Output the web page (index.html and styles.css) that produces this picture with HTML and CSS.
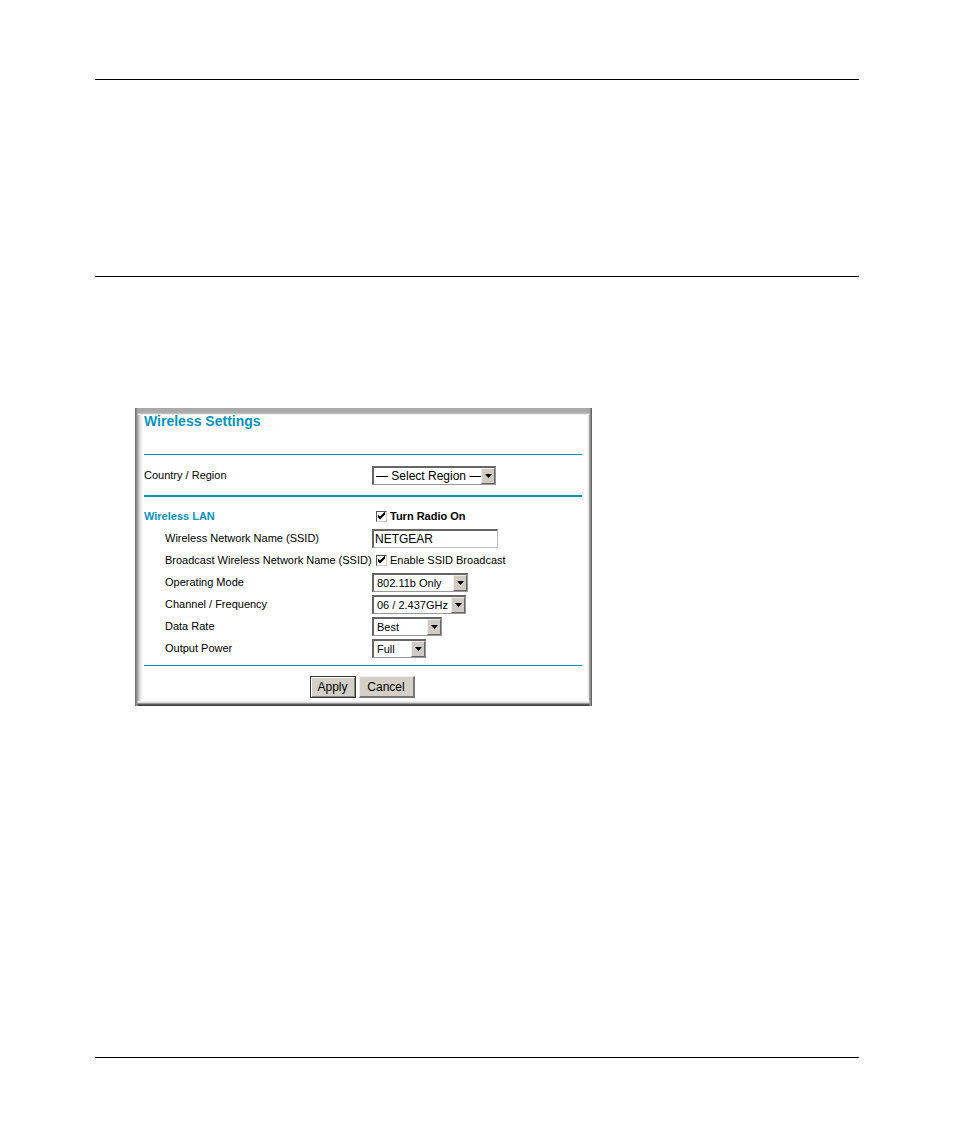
FILE: index.html
```html
<!DOCTYPE html>
<html lang="en">
<head>
<meta charset="utf-8">
<meta name="viewport" content="width=device-width, initial-scale=1">
<title>Wireless Settings</title>
<link rel="stylesheet" href="styles.css">
</head>
<body>
<div class="page">
  <hr class="page-rule">
  <main class="content">
    <hr class="page-rule">
    <form class="panel">
      <h1 class="title">Wireless Settings</h1>
      <hr class="line">
      <div class="row region">
        <label for="region">Country / Region</label>
        <span class="drop drop-region"><select id="region"><option>— Select Region —</option></select><span class="arrow"><svg viewBox="0 0 7 4"><path d="M0 0h7L3.5 4z"/></svg></span></span>
      </div>
      <hr class="line thick">
      <div class="rows">
        <div class="row">
          <h2 class="section">Wireless LAN</h2>
          <label class="check strong"><input type="checkbox" checked>Turn Radio On</label>
        </div>
        <div class="row item">
          <label for="ssid">Wireless Network Name (SSID)</label>
          <input class="text" id="ssid" type="text" value="NETGEAR">
        </div>
        <div class="row item">
          <span class="name">Broadcast Wireless Network Name (SSID)</span>
          <label class="check"><input type="checkbox" checked>Enable SSID Broadcast</label>
        </div>
        <div class="row item">
          <label for="mode">Operating Mode</label>
          <span class="drop drop-mode"><select id="mode"><option>802.11b Only</option></select><span class="arrow"><svg viewBox="0 0 7 4"><path d="M0 0h7L3.5 4z"/></svg></span></span>
        </div>
        <div class="row item">
          <label for="channel">Channel / Frequency</label>
          <span class="drop drop-channel"><select id="channel"><option>06 / 2.437GHz</option></select><span class="arrow"><svg viewBox="0 0 7 4"><path d="M0 0h7L3.5 4z"/></svg></span></span>
        </div>
        <div class="row item">
          <label for="rate">Data Rate</label>
          <span class="drop drop-rate"><select id="rate"><option>Best</option></select><span class="arrow"><svg viewBox="0 0 7 4"><path d="M0 0h7L3.5 4z"/></svg></span></span>
        </div>
        <div class="row item">
          <label for="power">Output Power</label>
          <span class="drop drop-power"><select id="power"><option>Full</option></select><span class="arrow"><svg viewBox="0 0 7 4"><path d="M0 0h7L3.5 4z"/></svg></span></span>
        </div>
      </div>
      <hr class="line">
      <div class="actions">
        <button class="button default" type="submit">Apply</button>
        <button class="button" type="button">Cancel</button>
      </div>
    </form>
  </main>
  <hr class="page-rule">
</div>
</body>
</html>
```
FILE: styles.css
```css
* {
  box-sizing: border-box;
}

body {
  margin: 0;
  background: #fff;
  color: #000;
  font-family: "Liberation Sans", Arial, sans-serif;
  font-size: 11px;
}

.page {
  display: flex;
  flex-direction: column;
  min-height: 100vh;
  padding: 79px 95px 87px;
}

.page-rule {
  width: 100%;
  height: 1px;
  margin: 0;
  border: 0;
  background: #000;
}

.content {
  flex: 1;
  padding-top: 196px;
}

.panel {
  max-width: 457px;
  margin: 131px 0 0 40px;
  padding: 5px 10px 8px 9px;
  background:
    linear-gradient(to right, #666, #999 2px, transparent 3px) left / 4px 100% no-repeat,
    linear-gradient(to left, #555, #999 2px, transparent 3px) right / 4px 100% no-repeat,
    linear-gradient(#a8a8a8, #acacac 5px, #fff 7px) top / 100% 7px no-repeat,
    linear-gradient(to top, #333, #666 2px, #ccc 3px, #fff 5px) bottom / 100% 5px no-repeat,
    linear-gradient(to right, #999, #999 2px, #e0e0e0 5px, #fff 8px) left / 8px 100% no-repeat,
    linear-gradient(to left, #999, #999 2px, #ddd 3px, #fff 5px) right / 5px 100% no-repeat,
    #fff;
}

.title {
  margin: 0 0 25px;
  color: #0894bd;
  font-size: 14px;
  line-height: 16px;
}

.line {
  height: 1px;
  margin: 0;
  border: 0;
  background: #0894bd;
}

.line.thick {
  height: 2px;
}

.row {
  display: grid;
  grid-template-columns: 228px 1fr;
  align-items: center;
  height: 22px;
}

.region {
  height: 40px;
}

.rows {
  padding: 8px 0 6px;
}

.item > :first-child {
  padding-left: 21px;
  white-space: nowrap;
}

.section {
  margin: 0;
  color: #0894bd;
  font-size: 11px;
}

.check {
  display: flex;
  align-items: center;
  gap: 3px;
  padding-left: 4px;
}

.strong {
  font-weight: bold;
}

.check input {
  width: 11px;
  height: 11px;
  margin: 0;
  appearance: none;
  border: 1px solid;
  border-color: #555 #ccc #ccc #555;
  background: #fff;
}

.check input:checked::before {
  content: "";
  display: block;
  width: 9px;
  height: 9px;
  background: #000;
  clip-path: polygon(1px 3px, 3px 5px, 8px 0, 8px 3px, 3px 8px, 1px 6px);
}

.text {
  width: 126px;
  height: 19px;
  padding: 0 1px;
  border: 1px solid;
  border-width: 2px 1px 1px 2px;
  border-color: #666 #bbb #bbb #666;
  border-radius: 0;
  background: #fff;
  color: #000;
  font: 12px "Liberation Sans", Arial, sans-serif;
}

.drop {
  position: relative;
  height: 19px;
}

.drop select {
  display: block;
  width: 100%;
  height: 100%;
  margin: 0;
  padding: 0 0 0 3px;
  appearance: none;
  border: 1px solid;
  border-width: 2px 1px 1px 2px;
  border-color: #666 #999 #999 #666;
  border-radius: 0;
  background: #fff;
  color: #000;
  font: 11px "Liberation Sans", Arial, sans-serif;
}

.drop-region { width: 124px; }
.drop-mode { width: 96px; }
.drop-channel { width: 94px; }
.drop-rate { width: 70px; }
.drop-power { width: 54px; }

.drop-region select {
  padding-left: 2px;
  font-size: 12px;
}

.arrow {
  position: absolute;
  top: 2px;
  right: 1px;
  bottom: 1px;
  display: grid;
  place-items: center;
  width: 14px;
  border: 1px solid;
  border-color: #eee #666 #666 #eee;
  background: #d0ccc5;
  pointer-events: none;
}

.arrow svg {
  width: 7px;
  height: 4px;
}

.actions {
  display: flex;
  justify-content: center;
  gap: 3px;
  padding: 10px 2px 0 0;
}

.button {
  width: 56px;
  height: 22px;
  padding: 0;
  border: 1px solid;
  border-width: 1px 2px 2px 1px;
  border-color: #eee #777 #777 #eee;
  border-radius: 0;
  background: #d4d0c8;
  color: #000;
  font: 12px "Liberation Sans", Arial, sans-serif;
}

.default {
  width: 46px;
  border-width: 1px;
  border-color: #333;
  box-shadow: inset 1px 1px #fff, inset -1px -1px #888;
}
```
